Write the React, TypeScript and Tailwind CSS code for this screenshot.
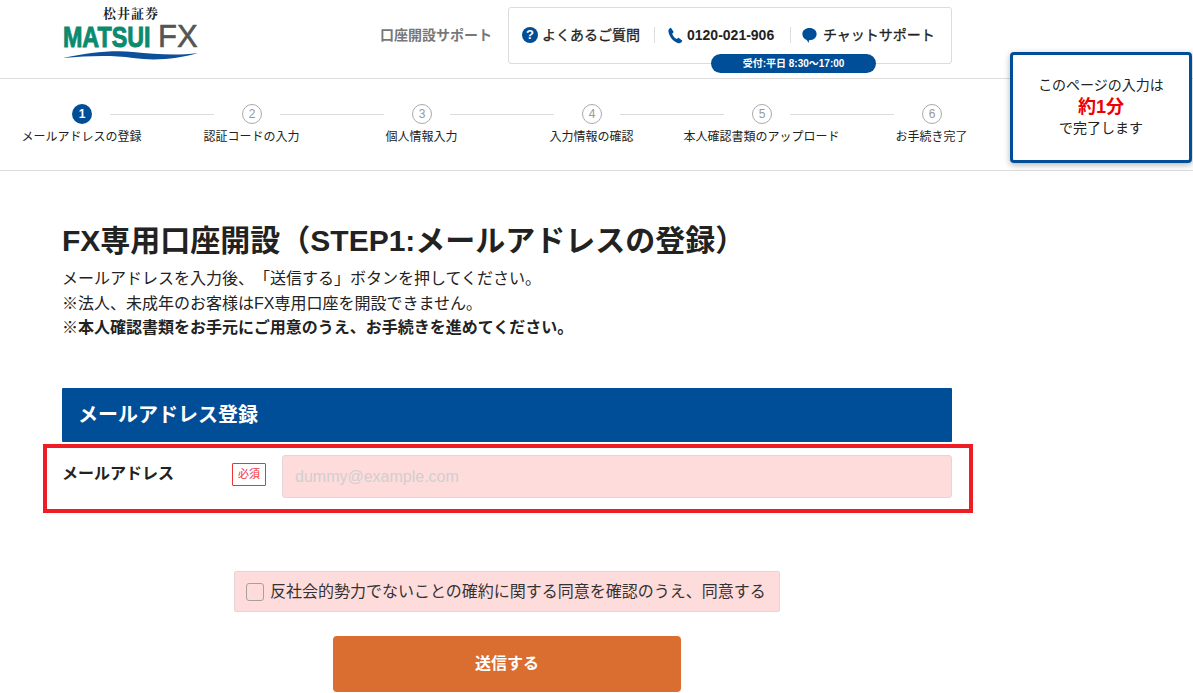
import React from "react";

const font = { fontFamily: '"Liberation Sans","Noto Sans CJK JP",sans-serif' };
const steps = ["メールアドレスの登録", "認証コードの入力", "個人情報入力", "入力情報の確認", "本人確認書類のアップロード", "お手続き完了"];

function Logo() {
  return (
    <div className="relative w-[140px] h-[64px] ml-[60px] shrink-0">
      <div className="absolute left-[43px] top-[5px] text-[13px] leading-[16px] font-bold text-[#222] tracking-[1px]" style={{ fontFamily: '"Noto Serif CJK JP","Noto Sans CJK JP",serif' }}>松井証券</div>
      <div className="absolute left-[3px] top-[22px] text-[30px] leading-[30px] font-bold text-[#0b8a70] [-webkit-text-stroke:1px_#0b8a70] scale-x-[0.775] origin-left" style={{ fontFamily: '"Liberation Sans",sans-serif' }}>MATSUI</div>
      <div className="absolute left-[98px] top-[22px] text-[31px] leading-[30px] text-[#555] [-webkit-text-stroke:0.6px_#555]" style={{ fontFamily: '"Liberation Sans",sans-serif' }}>FX</div>
      <svg className="absolute left-[3px] top-[50px]" width="135" height="11" viewBox="0 0 135 11"><path d="M0 8 C25 3 48 0 70 2 C92 4 112 6 135 3 C115 9 92 11 70 8 C48 5 25 6 0 8Z" fill="#0d4f98" /></svg>
    </div>
  );
}

export default function App() {
  return (
    <div className="relative w-[1193px] h-[693px] overflow-hidden bg-white text-[#222] [text-spacing-trim:space-all]" style={font}>
      <header className="h-[79px] border-b border-[#dcdcdc] flex">
        <Logo />
        <div className="ml-[180px] mt-[25px] w-[128px] text-[14px] leading-[20px] font-bold text-[#777]">口座開設サポート</div>
        <div className="relative mt-[7px] w-[444px] h-[57px] border border-[#dcdcdc] rounded-[3px] flex items-center pl-[13px] pb-[1px]">
          <div className="flex items-center w-[132px] gap-[4px] text-[14px] [-webkit-text-stroke:0.3px_#222]">
            <span className="w-[16px] h-[16px] rounded-full bg-[#004e97] text-white text-[13px] font-bold leading-[16px] text-center [-webkit-text-stroke:0]">?</span>
            <span>よくあるご質問</span>
          </div>
          <div className="flex items-center w-[136px] h-[16px] border-l border-[#dcdcdc] pl-[12px] gap-[3px]">
            <svg width="17" height="17" viewBox="0 0 15 16"><path d="M3.2 0.6 L5.8 4.6 L4.4 6.4 C5 8.4 6.6 10.4 8.4 11.4 L10.4 10 L14 13 C13.2 15 11.4 15.8 9.4 15 C4.8 13.2 1.4 8.6 0.8 4 C0.6 2.4 1.6 1.2 3.2 0.6Z" fill="#004e97" /></svg>
            <span className="text-[14px] font-bold">0120-021-906</span>
          </div>
          <div className="flex items-center h-[16px] border-l border-[#dcdcdc] pl-[11px] gap-[6px] text-[14px] [-webkit-text-stroke:0.3px_#222]">
            <svg width="15" height="17" viewBox="0 0 16 17"><path d="M8 0.5 C12.4 0.5 15.6 3 15.6 7 C15.6 11 12.4 13.5 8 13.5 L7.4 13.5 L7.2 16.6 L5 13.2 C2.2 12.4 0.4 10 0.4 7 C0.4 3 3.6 0.5 8 0.5Z" fill="#004e97" /></svg>
            <span>チャットサポート</span>
          </div>
          <div className="absolute left-[202px] top-[46px] w-[165px] h-[19px] rounded-full bg-[#004e97] text-white text-[10px] font-bold leading-[19px] text-center">受付:平日 8:30〜17:00</div>
        </div>
      </header>

      <nav className="h-[92px] border-b border-[#dcdcdc] flex ml-[-3px] pt-[25px]">
        {steps.map((s, i) => (
          <div key={s} className="relative w-[170px] flex flex-col items-center shrink-0">
            <div className={i === 0
              ? "w-[20px] h-[20px] rounded-full bg-[#004e97] text-white text-[12px] font-bold leading-[20px] text-center"
              : "w-[20px] h-[20px] rounded-full border border-[#aaa] text-[#999] text-[12px] leading-[18px] text-center"}>{i + 1}</div>
            <div className="mt-[4px] pr-[1px] text-[12px] leading-[18px] whitespace-nowrap">{s}</div>
            {i < 5 && <div className="absolute left-[113px] top-[9.5px] w-[104px] h-px bg-[#dcdcdc]" />}
          </div>
        ))}
      </nav>

      <aside className="absolute left-[1010px] top-[52px] w-[182px] h-[111px] bg-white border-[3px] border-[#004e97] rounded-[4px] shadow-[0_2px_6px_rgba(0,0,0,0.3)] flex flex-col items-center justify-center text-[14px] leading-[21px] pb-[1px]">
        <div>このページの入力は</div>
        <div className="text-[18px] leading-[22px] font-bold text-[#ee0000]">約1分</div>
        <div>で完了します</div>
      </aside>

      <main className="pl-[62px] w-[952px]">
        <h1 className="mt-[50px] text-[30px] leading-[40px] font-bold whitespace-nowrap">FX専用口座開設（STEP1:メールアドレスの登録）</h1>
        <div className="mt-[6px] text-[16px] leading-[24.5px]">
          <p>メールアドレスを入力後、「送信する」ボタンを押してください。</p>
          <p>※法人、未成年のお客様はFX専用口座を開設できません。</p>
          <p className="font-bold">※本人確認書類をお手元にご用意のうえ、お手続きを進めてください。</p>
        </div>
        <div className="mt-[47.5px] h-[54px] bg-[#004e97] rounded-[1px] pl-[16px] text-white text-[20px] font-bold leading-[54px]">メールアドレス登録</div>
        <div className="relative mt-[13px] h-[43px] flex items-center">
          <div className="w-[170px] text-[16px] font-bold pb-[6px]">メールアドレス</div>
          <div className="w-[34px] h-[23px] border border-[#e33] rounded-[1px] text-[#e33] text-[11px] leading-[21px] text-center mb-[5px]">必須</div>
          <input readOnly placeholder="dummy@example.com" className="ml-[16px] w-[670px] h-[43px] bg-[#ffdcdc] border border-[#e2d6d6] rounded-[3px] px-[12px] text-[16px] placeholder:text-[#cfcfcf] outline-none" />
          <div className="absolute left-[-19px] top-[-11px] w-[930px] h-[69px] border-[4px] border-[#ee1c25] pointer-events-none" />
        </div>
        <label className="mt-[73px] ml-[172px] w-[546px] h-[41px] bg-[#ffdcdc] border border-[#e3d5d5] rounded-[2px] flex items-center pl-[11px] gap-[6px] text-[16px] text-[#333] whitespace-nowrap">
          <span className="w-[18px] h-[18px] border-[1.5px] border-[#a8a0a0] rounded-[3px] shrink-0" />
          反社会的勢力でないことの確約に関する同意を確認のうえ、同意する
        </label>
        <button className="block mt-[24px] ml-[271px] w-[348px] h-[56px] bg-[#d96e30] rounded-[4px] text-white text-[16px] font-bold">送信する</button>
      </main>
    </div>
  );
}
